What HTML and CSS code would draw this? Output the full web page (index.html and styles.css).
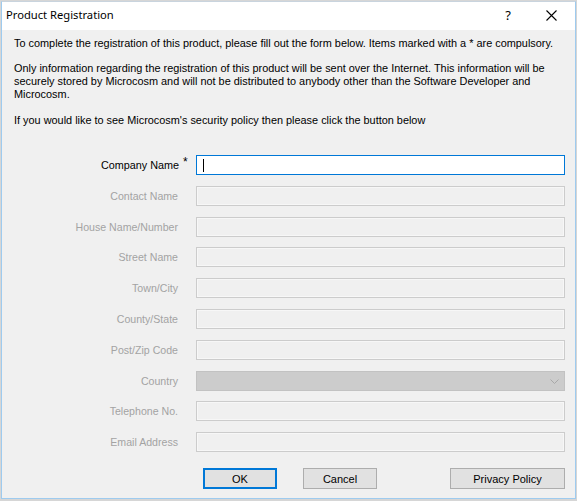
FILE: index.html
```html
<!DOCTYPE html>
<html>
<head>
<meta charset="utf-8">
<link rel="stylesheet" href="styles.css">
</head>
<body>
<div class="window">
  <div class="titlebar">
    <span class="title">Product Registration</span>
    <span class="help">?</span>
    <span class="close"><svg width="11" height="11" viewBox="0 0 11 11"><path d="M0.5 0.5 L10.5 10.5 M10.5 0.5 L0.5 10.5" stroke="#000" stroke-width="1.1" fill="none"/></svg></span>
  </div>
  <div class="client">
    <p class="p1">To complete the registration of this product, please fill out the form below. Items marked with a * are compulsory.</p>
    <p class="p2">Only information regarding the registration of this product will be sent over the Internet. This information will be<br>securely stored by Microcosm and will not be distributed to anybody other than the Software Developer and<br>Microcosm.</p>
    <p class="p3">If you would like to see Microcosm's security policy then please click the button below</p>
    <div class="form">
      <label class="lbl active">Company Name</label><span class="req">*</span><div class="field focus"><span class="caret"></span></div>
      <label class="lbl">Contact Name</label><span></span><div class="field"></div>
      <label class="lbl">House Name/Number</label><span></span><div class="field"></div>
      <label class="lbl">Street Name</label><span></span><div class="field"></div>
      <label class="lbl">Town/City</label><span></span><div class="field"></div>
      <label class="lbl">County/State</label><span></span><div class="field"></div>
      <label class="lbl">Post/Zip Code</label><span></span><div class="field"></div>
      <label class="lbl">Country</label><span></span><div class="field select"><svg class="chev" width="9" height="5" viewBox="0 0 9 5"><path d="M0.5 0.5 L4.5 4.5 L8.5 0.5" stroke="#a8a8a8" fill="none"/></svg></div>
      <label class="lbl">Telephone No.</label><span></span><div class="field"></div>
      <label class="lbl">Email Address</label><span></span><div class="field"></div>
    </div>
    <div class="buttons">
      <button class="btn default">OK</button>
      <button class="btn cancel">Cancel</button>
      <button class="btn privacy">Privacy Policy</button>
    </div>
  </div>
</div>
</body>
</html>
```

FILE: styles.css
```css
html, body {
  margin: 0;
  padding: 0;
}
body {
  background: #d6d6d6;
  width: 577px;
  height: 501px;
  font-family: "Liberation Sans", Arial, sans-serif;
  font-size: 11px;
  color: #000;
}
.window {
  margin: 1px 0 0 1px;
  width: 573px;
  height: 496px;
  border: 1px solid #9ecbef;
  border-top-color: #c9d4de;
  background: #f0f0f0;
  display: flex;
  flex-direction: column;
}
.titlebar {
  height: 28px;
  background: #fff;
  display: flex;
  align-items: center;
  flex: none;
}
.title {
  font-family: "Noto Sans", "Liberation Sans", sans-serif;
  font-size: 11.2px;
  margin-left: 4px;
  margin-top: -3px;
}
.help {
  font-family: "Noto Sans", "Liberation Sans", sans-serif;
  font-size: 13px;
  margin-left: auto;
  margin-right: 35px;
  margin-top: -3px;
}
.close {
  margin-right: 18px;
  margin-top: -1px;
  display: flex;
}
.client {
  flex: 1;
  padding: 0 0 0 12px;
}
p {
  margin: 0;
  line-height: 13px;
  white-space: nowrap;
  font-size: 10.9px;
}
.p1 { margin-top: 7px; }
.p2 { margin-top: 12px; }
.p3 { margin-top: 13px; }
.form {
  margin-top: 28px;
  display: grid;
  grid-template-columns: 166px 16px 369px;
  grid-auto-rows: 20px;
  row-gap: 10.8px;
  align-items: center;
}
.lbl {
  text-align: right;
  color: #a3a3a3;
  font-size: 10.6px;
  padding-right: 2px;
}
.lbl.active { color: #000; font-size: 10.8px; padding-right: 1px; }
.req {
  align-self: start;
  font-size: 12px;
  line-height: 12px;
  padding-left: 3px;
  margin-top: 1px;
}
.field {
  height: 20px;
  box-sizing: border-box;
  border: 1px solid #cccccc;
  box-shadow: inset 0 0 0 1px #f7f7f7;
  background: #f0f0f0;
  position: relative;
}
.field.focus {
  border-color: #0078d7;
  background: #fff;
  box-shadow: none;
}
.caret {
  position: absolute;
  left: 6px;
  top: 3px;
  width: 1px;
  height: 13px;
  background: #000;
}
.field.select {
  background: #cccccc;
  border-color: #c2c2c2;
  box-shadow: none;
}
.chev {
  position: absolute;
  right: 5px;
  top: 7px;
}
.buttons {
  margin-top: 16px;
  display: flex;
  padding-left: 189px;
}
.btn {
  height: 21px;
  box-sizing: border-box;
  background: #e1e1e1;
  border: 1px solid #adadad;
  font-family: "Liberation Sans", Arial, sans-serif;
  font-size: 11px;
  color: #000;
  padding: 0;
  margin: 0;
}
.btn.default {
  width: 74px;
  border: 2px solid #0078d7;
}
.btn.cancel {
  width: 74px;
  margin-left: 26px;
}
.btn.privacy {
  width: 115px;
  margin-left: 73px;
}
```
